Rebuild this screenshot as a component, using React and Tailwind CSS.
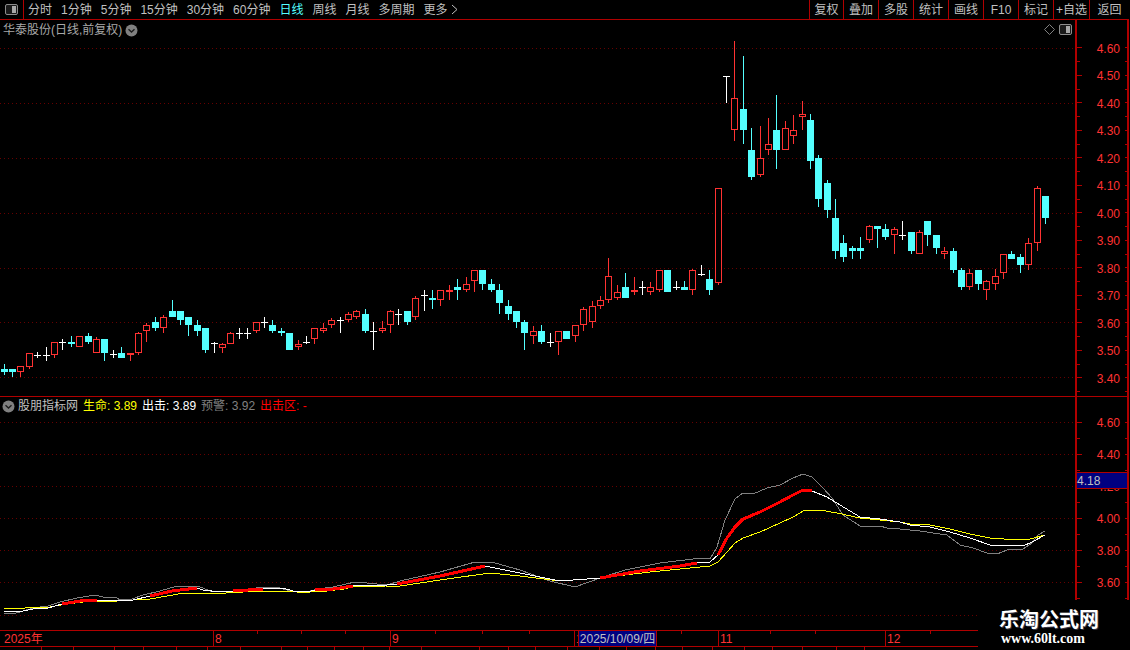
import React from 'react';

const FONT = { fontFamily: '"Liberation Sans", "Noto Sans CJK SC", sans-serif' };

// type, x, body top, body bottom, wick top, wick bottom
const CANDLES = [
  ['c',4,369,372,364,375],['c',12,369,372,369,377],['r',20,366,372,366,377],['r',29,353,367,353,369],['w',37,355,355,352,358],
  ['w',46,355,355,347,361],['r',54,342,355,342,358],['w',62,342,342,339,350],['c',71,342,344,336,347],['r',79,336,347,336,347],
  ['c',88,336,342,333,344],['r',96,339,353,337,353],['c',104,339,353,339,361],['w',113,354,354,350,358],['c',121,353,358,347,358],
  ['r',130,353,355,353,361],['r',138,333,353,332,355],['r',146,325,331,323,342],['c',155,322,328,317,331],['r',163,317,328,315,333],
  ['c',172,311,317,300,317],['c',180,311,320,311,325],['c',188,317,325,317,336],['c',197,325,331,320,336],['c',205,328,350,328,353],
  ['w',214,343,343,342,353],['r',222,344,348,343,353],['r',230,333,344,332,344],['w',239,333,333,328,339],['w',247,333,333,328,339],
  ['r',256,322,331,322,333],['w',264,322,322,317,328],['c',272,325,331,320,333],['c',281,331,333,328,336],['c',289,333,350,333,350],
  ['r',298,344,347,340,350],['w',306,342,342,336,344],['r',314,328,339,328,344],['r',323,328,331,323,333],['r',331,320,325,318,328],
  ['w',340,320,320,317,333],['r',348,314,320,312,322],['r',356,311,317,310,319],['c',365,314,331,309,333],['w',373,331,331,322,350],
  ['r',382,328,331,321,333],['r',390,311,325,310,333],['w',398,314,314,309,325],['c',407,311,322,311,325],['r',415,298,317,296,320],
  ['w',424,295,295,290,311],['c',432,298,300,290,309],['r',440,290,300,290,306],['r',449,290,292,285,300],['c',457,287,290,279,300],
  ['r',466,284,290,277,292],['r',474,270,281,270,292],['c',482,270,284,270,290],['c',491,284,290,279,292],['c',499,290,303,284,314],
  ['c',508,306,314,300,320],['c',516,311,322,311,328],['c',524,322,333,320,350],['r',533,331,336,326,344],['c',541,331,342,325,344],
  ['w',550,342,342,333,347],['r',558,331,342,331,355],['c',566,331,339,331,339],['r',575,325,336,325,342],['r',583,309,325,307,331],
  ['r',592,306,322,301,328],['r',600,300,306,296,309],['r',608,276,300,258,303],['r',617,292,298,285,300],['c',625,287,298,273,298],
  ['r',634,290,292,277,295],['w',642,287,287,281,295],['r',650,287,292,282,295],['r',659,270,290,270,292],['c',667,270,292,270,292],
  ['w',676,287,287,281,290],['c',684,287,290,281,290],['r',692,270,290,269,295],['w',701,274,274,265,276],['c',709,279,290,270,295],
  ['r',718,188,283,188,285],['t',726,76,76,76,103],['r',734,98,130,41,141],['c',743,109,130,56,144],['c',751,150,177,128,180],
  ['r',760,158,175,126,177],['r',768,144,150,118,155],['c',776,130,150,95,169],['r',785,128,150,121,150],['r',793,130,136,115,144],
  ['r',802,114,117,101,130],['c',810,120,161,114,169],['c',818,158,199,155,207],['c',827,183,210,180,218],['c',835,218,251,199,259],
  ['c',843,243,257,235,262],['c',852,248,251,246,259],['c',860,248,251,237,259],['r',869,226,240,225,243],['c',877,226,229,226,248],
  ['c',885,229,237,224,240],['r',894,229,235,227,254],['w',902,235,235,221,240],['c',911,232,251,232,254],['r',919,232,254,230,254],
  ['c',927,221,235,221,246],['c',936,235,248,235,254],['r',944,251,254,247,259],['c',953,251,270,248,273],['c',961,270,287,268,290],
  ['r',969,273,287,269,290],['c',978,270,284,270,290],['r',986,281,290,280,300],['r',995,276,284,269,290],['r',1003,254,273,254,279],
  ['c',1011,254,259,251,259],['c',1020,257,265,254,273],['r',1028,243,265,238,270],['r',1037,188,243,186,251],['c',1045,196,218,196,224],
];

const YELLOW = [[4,608],[25,608],[50,607],[61,605],[75,603],[92,601],[117,601],[133,600],[150,599],[167,596],[184,593],[210,594],[226,593],[243,592],[260,591],[293,591],[297,592],[310,592],[327,591],[344,589],[352,587],[386,586],[400,586],[440,580],[490,573],[520,576],[560,581],[600,578],[650,572],[680,569],[710,566],[718,562],[727,552],[735,543],[743,538],[760,532],[780,523],[793,517],[805,510],[820,510],[837,513],[860,518],[880,520],[900,522],[910,524],[930,525],[950,529],[970,534],[990,538],[1017,540],[1030,539],[1045,535]];
const WHITE = [[4,611],[16,611],[23,611],[33,609],[48,608],[62,604],[80,601],[97,600],[133,600],[150,596],[172,591],[197,588],[203,590],[220,592],[233,591],[263,589],[283,588],[293,591],[307,592],[315,590],[333,589],[353,586],[377,585],[387,585],[397,584],[440,576],[485,566],[520,573],[560,581],[600,578],[640,571],[680,566],[697,563],[710,562],[718,555],[727,538],[735,527],[743,519],[760,512],[780,502],[793,495],[803,490],[812,491],[827,497],[840,505],[860,517],[880,519],[900,522],[910,525],[930,527],[950,532],[970,538],[990,545],[1023,546],[1032,542],[1045,535]];
const GRAY = [[4,613],[16,613],[23,611],[33,608],[48,606],[60,602],[77,598],[95,595],[103,597],[117,598],[120,600],[132,599],[143,595],[160,591],[177,586],[198,586],[210,591],[227,592],[243,590],[263,587],[280,588],[290,591],[307,592],[317,589],[333,587],[355,582],[367,583],[387,585],[400,581],[440,572],[475,562],[495,563],[520,570],[550,581],[575,587],[600,578],[625,570],[660,563],[693,559],[700,558],[710,559],[717,547],[725,520],[735,499],[743,493],[753,494],[767,488],[780,485],[793,478],[803,474],[812,477],[823,488],[832,498],[843,515],[860,526],[880,526],[887,528],[900,529],[920,531],[933,533],[947,535],[960,545],[973,548],[987,553],[997,554],[1007,550],[1023,549],[1032,543],[1038,535],[1045,531]];

const RED_RANGES = [[62,97],[138,198],[232,273],[315,355],[390,500],[600,702],[718,812]];

const MAIN_GRID = [48, 103, 158, 213, 268, 322, 377];
const SUB_GRID = [422, 454, 486, 518, 550, 582, 615];

const PERIODS = ['分时', '1分钟', '5分钟', '15分钟', '30分钟', '60分钟', '日线', '周线', '月线', '多周期'];
const ACTIONS = [
  ['复权', 'w-[34px]'], ['叠加', 'w-[35px]'], ['多股', 'w-[35px]'], ['统计', 'w-[35px]'], ['画线', 'w-[35px]'],
  ['F10', 'w-[35px]'], ['标记', 'w-[35px]'], ['+自选', 'w-[36px]'], ['返回', 'w-[40px]'],
];

const MAIN_AXIS = ['4.60', null, '4.50', null, '4.40', null, '4.30', null, '4.20', null, '4.10', null, '4.00', null, '3.90', null, '3.80', null, '3.70', null, '3.60', null, '3.50', null, '3.40', null];
const SUB_AXIS = ['4.60', null, '4.40', null, '4.20', null, '4.00', null, '3.80', null, '3.60', null, null];

const TIME_CELLS = [
  { w: 213, label: '2025年', first: true }, { w: 44, label: '8', major: true }, { w: 44, tick: true }, { w: 44, tick: true }, { w: 45, tick: true },
  { w: 45, label: '9', major: true }, { w: 47, tick: true }, { w: 47, tick: true }, { w: 45, tick: true },
  { w: 107, label: '10', major: true }, { w: 37, tick: true }, { w: 52, label: '11', major: true }, { w: 45, tick: true }, { w: 70, tick: true },
  { w: 45, label: '12', major: true }, { w: 48, tick: true },
];

const TABS = [42, 32, 41, 29, 33, 31, 33, 41, 26, 27, 29, 26, 32, 58, 29, 27, 32, 32, 27, 29, 27, 30, 32, 28, 30, 34, 28];

function toPoints(pts) {
  return pts.map((p) => p.join(',')).join(' ');
}

function Candle({ c }) {
  const [type, x, top, bottom, wickTop, wickBottom] = c;
  if (type === 'w' || type === 't') {
    return (
      <g fill="#ffffff">
        <rect x={x} y={wickTop} width="1" height={wickBottom - wickTop} />
        <rect x={x - 3} y={top} width="7" height="1" />
      </g>
    );
  }
  const color = type === 'c' ? '#54ffff' : '#ff3232';
  return (
    <g>
      <rect x={x} y={wickTop} width="1" height={wickBottom - wickTop} fill={color} />
      {type === 'c' ? (
        <rect x={x - 3} y={top} width="7" height={bottom - top} fill={color} />
      ) : (
        <rect x={x - 2.5} y={top + 0.5} width="6" height={Math.max(bottom - top - 1, 1)} fill="#000000" stroke={color} strokeWidth="1" />
      )}
    </g>
  );
}

function GridLines({ ys }) {
  return ys.map((y) => (
    <line key={y} x1="0" x2="1075" y1={y + 0.5} y2={y + 0.5} stroke="#660000" strokeDasharray="1 3" />
  ));
}

function Chevron({ className }) {
  return (
    <svg width="13" height="13" viewBox="0 0 13 13" className={className}>
      <circle cx="6.5" cy="6.5" r="6" fill="#808080" />
      <path d="M3.5 5.2 L6.5 8 L9.5 5.2" stroke="#1c1c1c" strokeWidth="1.4" fill="none" />
    </svg>
  );
}

function PanelToggle() {
  return (
    <svg width="13" height="11" viewBox="0 0 13 11">
      <rect x="0.5" y="0.5" width="12" height="10" rx="1.5" fill="#1a1a1a" stroke="#8c8c8c" />
      <rect x="7" y="2" width="4" height="7" fill="#a8a8a8" />
    </svg>
  );
}

function Axis({ rows, rowH, topPad, children }) {
  return (
    <div className={`relative w-[54px] shrink-0 border-x-2 border-[#b00000] ${topPad}`}>
      {rows.map((label, i) => (
        <div key={i} className={`flex items-center ${rowH}`}>
          <span className={label ? 'h-px w-[5px] bg-[#b00000]' : 'h-px w-[3px] bg-[#b00000]'} />
          {label && <span className="ml-auto mr-[5px] mt-[2px] text-[12px] leading-none text-[#ff3232]">{label}</span>}
          <span className={label ? 'h-px w-[2px] bg-[#b00000]' : 'ml-auto h-px w-[2px] bg-[#b00000]'} />
        </div>
      ))}
      {children}
    </div>
  );
}

export default function App() {
  return (
    <div className="relative flex h-[650px] w-[1130px] flex-col overflow-hidden bg-black pr-px" style={FONT}>
      {/* toolbar */}
      <div className="flex h-[20px] shrink-0 items-center border-b border-[#b00000] text-[12px] text-[#c0c0c0]">
        <div className="flex h-full w-[24px] items-center justify-center border-r border-[#b00000]">
          <PanelToggle />
        </div>
        <div className="ml-[4px] flex items-center gap-[9px]">
          {PERIODS.map((p) => (
            <span key={p} className={p === '日线' ? 'text-[#54ffff]' : ''}>{p}</span>
          ))}
          <span className="flex items-center gap-[3px]">
            更多
            <svg width="7" height="11" viewBox="0 0 7 11"><path d="M1 1 L6 5.5 L1 10" stroke="#c0c0c0" fill="none" /></svg>
          </span>
        </div>
        <div className="ml-auto flex h-full">
          {ACTIONS.map(([name, w]) => (
            <div key={name} className={`flex h-full items-center justify-center border-l border-[#b00000] ${w}`}>{name}</div>
          ))}
        </div>
      </div>

      {/* price pane */}
      <div className="flex h-[377px] shrink-0 border-b border-[#b00000]">
        <div className="relative w-[1075px] shrink-0">
          <svg width="1075" height="376" viewBox="0 20 1075 376" className="block" shapeRendering="crispEdges">
            <GridLines ys={MAIN_GRID} />
            {CANDLES.map((c) => <Candle key={c[1]} c={c} />)}
          </svg>
          <div className="absolute left-[3px] top-[2px] flex items-center gap-[3px] text-[12px] leading-[16px] text-[#a8a8a8]">
            华泰股份(日线,前复权)
            <Chevron />
          </div>
          <div className="absolute right-[3px] top-[4px] flex items-center gap-[4px]">
            <svg width="11" height="11" viewBox="0 0 11 11"><path d="M5.5 0.5 L10.5 5.5 L5.5 10.5 L0.5 5.5 Z" stroke="#808080" fill="none" /></svg>
            <PanelToggle />
          </div>
        </div>
        <Axis rows={MAIN_AXIS} rowH="h-[13.75px]" topPad="pt-[21px]" />
      </div>

      {/* indicator pane */}
      <div className="flex h-[234px] shrink-0 border-b border-[#b00000]">
        <div className="relative w-[1075px] shrink-0">
          <svg width="1075" height="233" viewBox="0 397 1075 233" className="block" shapeRendering="crispEdges">
            <GridLines ys={SUB_GRID} />
            <polyline points={toPoints(GRAY)} fill="none" stroke="#808080" strokeWidth="1" />
            <polyline points={toPoints(YELLOW)} fill="none" stroke="#ffff00" strokeWidth="1" />
            <polyline points={toPoints(WHITE)} fill="none" stroke="#ffffff" strokeWidth="1" />
            {RED_RANGES.map(([a, b]) => (
              <polyline key={a} points={toPoints(WHITE.filter((p) => p[0] >= a && p[0] <= b))} fill="none" stroke="#ff0000" strokeWidth="3" />
            ))}
          </svg>
          <div className="absolute left-[2px] top-[1px] flex items-center text-[12px] leading-[16px]">
            <Chevron className="mr-[3px]" />
            <span className="mr-[5px] text-[#c0c0c0]">股朋指标网</span>
            <span className="mr-[5px] text-[#ffff00]">生命: 3.89</span>
            <span className="mr-[5px] text-white">出击: 3.89</span>
            <span className="mr-[5px] text-[#808080]">预警: 3.92</span>
            <span className="text-[#ff0000]">出击区: -</span>
          </div>
        </div>
        <Axis rows={SUB_AXIS} rowH="h-[16px]" topPad="pt-[17px]">
          {/* current price tag */}
          <div className="absolute left-0 right-0 top-[75px] flex h-[17px] items-center border-y border-[#b00000] bg-[#000080] text-[12px] leading-none text-[#c0c0c0]">
            4.18
          </div>
        </Axis>
      </div>

      {/* time axis */}
      <div className="relative flex h-[16px] shrink-0 border-b border-[#b00000] text-[12px] leading-[14px] text-[#ff3232]">
        {TIME_CELLS.map((c, i) => (
          <div key={i} className="relative flex shrink-0" style={{ width: c.w }}>
            {c.major && <span className="h-full w-px bg-[#b00000]" />}
            {c.tick && <span className="h-[3px] w-px bg-[#b00000]" />}
            {c.label && <span className={c.first ? 'pl-[4px] pt-px' : 'pl-px pt-px'}>{c.label}</span>}
          </div>
        ))}
        <div className="absolute left-[578px] top-0 flex h-full w-[79px] items-center justify-center border-x border-[#b00000] bg-[#000080] text-[#c0c0c0]">
          2025/10/09/四
        </div>
      </div>

      {/* tab strip, cut off by the window edge */}
      <div className="flex h-[4px] shrink-0 overflow-hidden">
        {TABS.map((w, i) => (
          <div key={i} className="shrink-0 border-r border-[#b00000]" style={{ width: w }} />
        ))}
      </div>

      {/* watermark */}
      <div className="absolute bottom-0 right-0 flex h-[50px] w-[152px] flex-col items-start bg-black pl-[21px] pt-[7px] text-white">
        <span className="text-[20px] font-bold leading-[24px] [text-shadow:1px_1px_0_#334]" style={{ fontFamily: '"Noto Sans CJK SC", sans-serif' }}>乐淘公式网</span>
        <span className="pl-[2px] text-[14px] font-bold leading-[16px]" style={{ fontFamily: '"Liberation Serif", serif' }}>www.60lt.com</span>
      </div>
    </div>
  );
}
